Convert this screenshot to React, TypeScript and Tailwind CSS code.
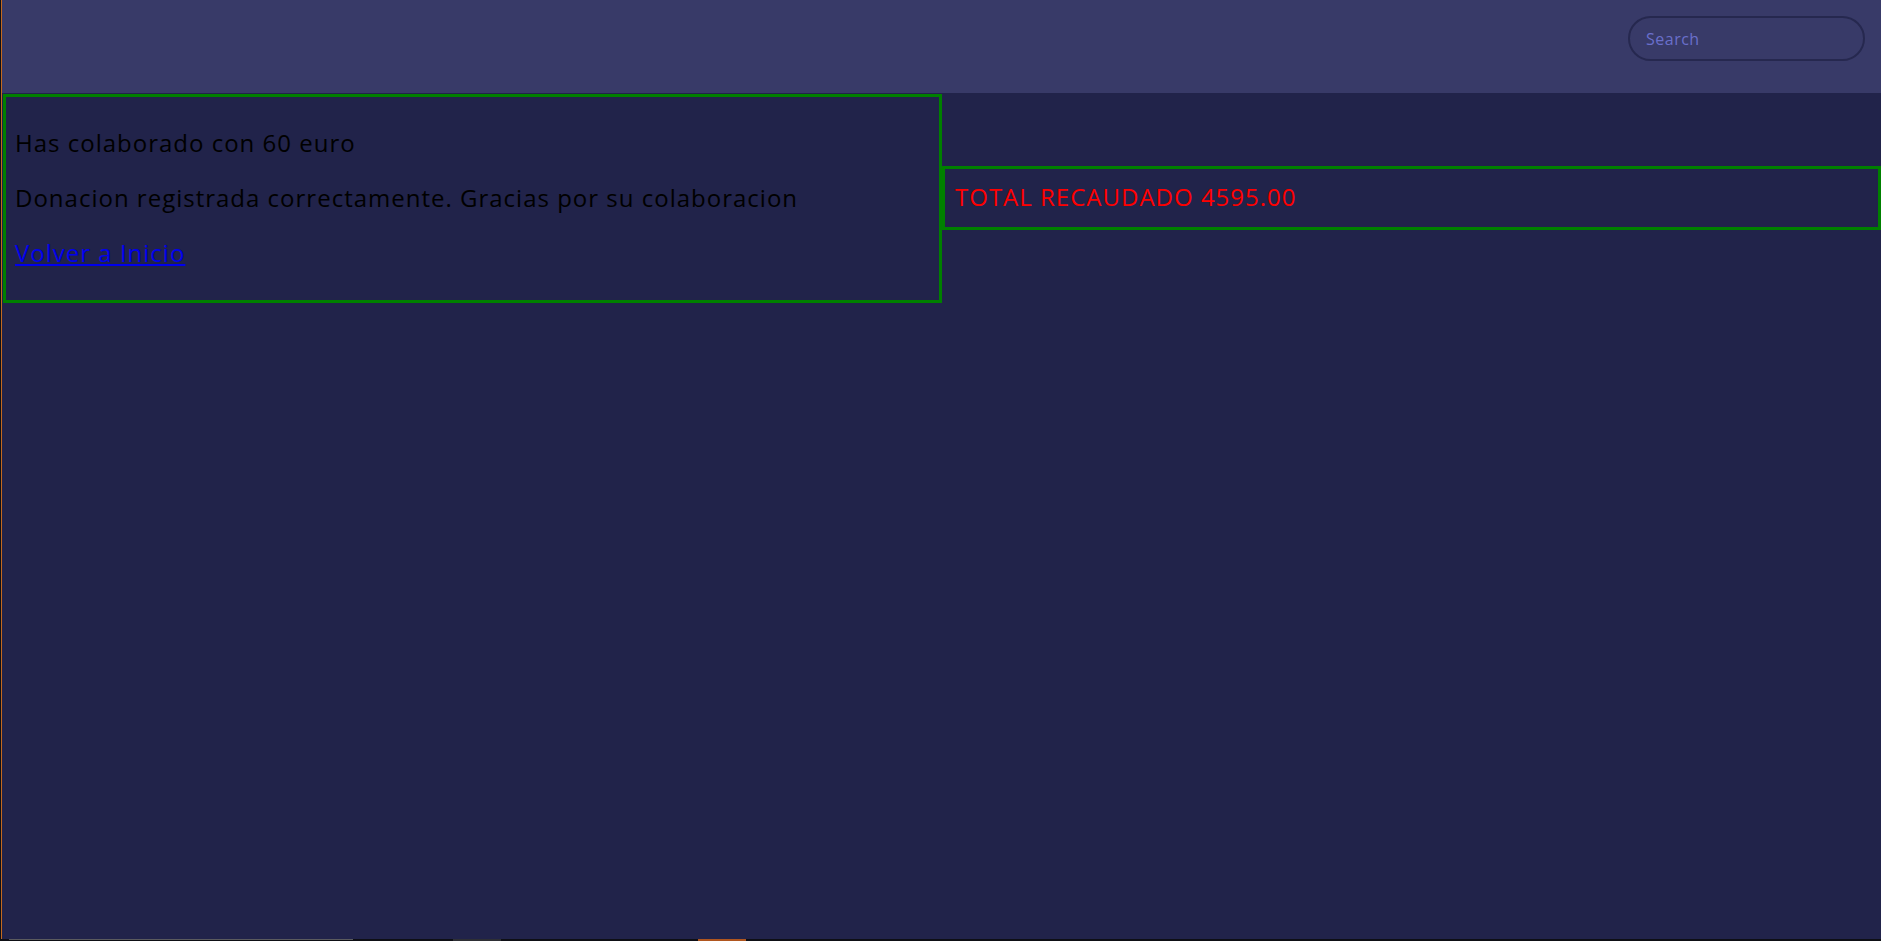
import React from "react";

export default function App() {
  const font = { fontFamily: '"Open Sans", sans-serif' };
  return (
    <div className="flex h-[941px] w-[1881px] flex-col bg-[#0e0f15]" style={font}>
      <div className="flex flex-1">
        <div className="w-px bg-[#0e0f15]" />
        <div className="w-px bg-[#c2691f]" />
        <div className="flex flex-1 flex-col bg-[#21234a]">
          <header className="flex h-[93px] justify-end bg-[#383a68] pt-4 pr-4">
            <input
              type="text"
              placeholder="Search"
              className="h-[45px] w-[237px] rounded-full border-2 border-[#26284f] bg-transparent pl-4 text-base tracking-[0.5px] text-[#6a6fcb] outline-none placeholder:text-[#6a6fcb]"
            />
          </header>
          <div className="flex items-start pl-px">
            <div className="mt-px flex w-[939px] flex-col gap-[19px] border-[3px] border-[#008000] pt-[28px] pr-2 pb-[29px] pl-[9px] text-2xl leading-9 tracking-[1px] text-black">
              <p>Has colaborado con 60 euro</p>
              <p>Donacion registrada correctamente. Gracias por su colaboracion</p>
              <a href="#" className="text-[#0000ee] underline">
                Volver a Inicio
              </a>
            </div>
            <div className="mt-[73px] w-[939px] border-[3px] border-[#008000] pt-[10px] pb-[12px] pl-[10px] text-2xl leading-9 tracking-[1px] text-[#ff0000]">
              TOTAL RECAUDADO 4595.00
            </div>
          </div>
        </div>
      </div>
      <div className="flex h-[2px] items-start">
        <div className="ml-[9px] h-px w-[344px] bg-[#5a5a5e]" />
        <div className="ml-[100px] h-[2px] w-[48px] bg-[#2e2f35]" />
        <div className="ml-[197px] h-[2px] w-[48px] bg-[#b0561f]" />
      </div>
    </div>
  );
}
